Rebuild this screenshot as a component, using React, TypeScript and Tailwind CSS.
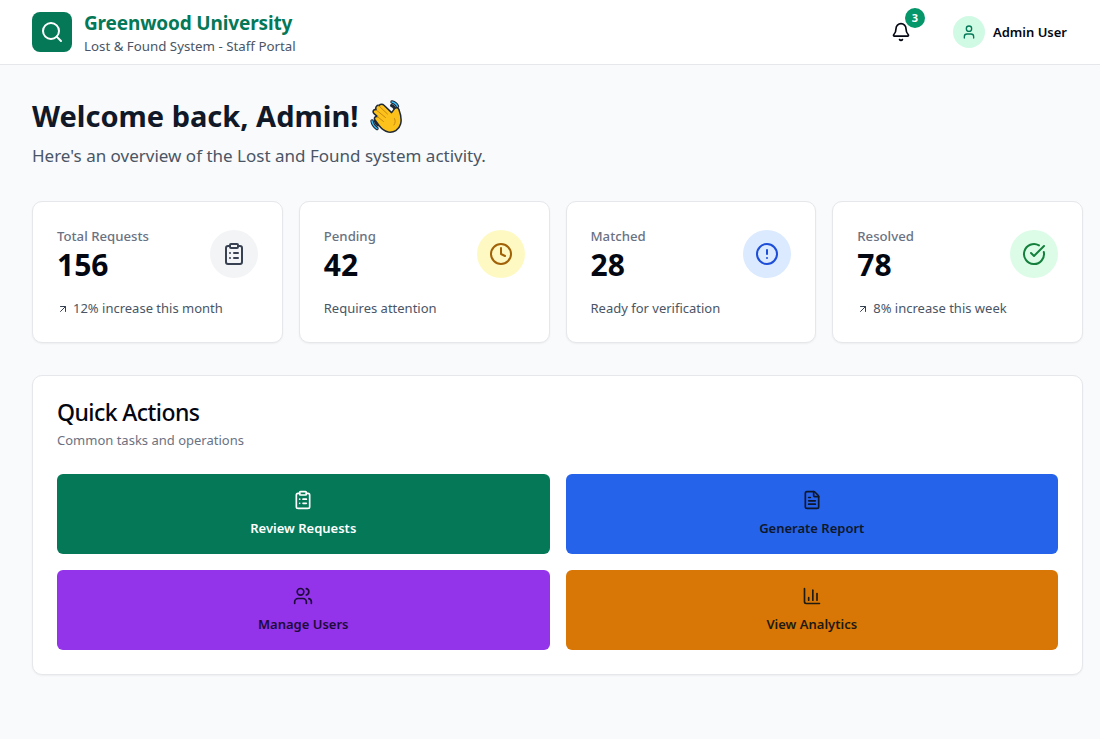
import {
  ArrowUpRight,
  Bell,
  ChartColumn,
  CircleAlert,
  CircleCheckBig,
  ClipboardList,
  Clock,
  FileText,
  Search,
  User,
  Users,
} from "lucide-react";
import type { ReactNode } from "react";

interface StatCardProps {
  label: string;
  value: string;
  note: string;
  trend?: boolean;
  iconBg: string;
  icon: ReactNode;
}

function StatCard({ label, value, note, trend, iconBg, icon }: StatCardProps) {
  return (
    <div className="h-[142px] rounded-[10px] border border-gray-200 bg-white px-6 pt-[23px] shadow-[0_1px_2px_rgba(0,0,0,0.05)]">
      <div className="flex items-start justify-between">
        <div>
          <p className="text-[13.2px] leading-[22px] font-medium text-gray-500">{label}</p>
          <p className="text-[30px] leading-[36px] font-bold text-[#030712]">{value}</p>
        </div>
        <div className={`mt-[5px] flex h-12 w-12 items-center justify-center rounded-full ${iconBg}`}>
          {icon}
        </div>
      </div>
      <div className="mt-4 flex h-5 items-center gap-1 text-[13px] text-gray-600">
        {trend && <ArrowUpRight className="h-3 w-3 text-gray-700" />}
        <span>{note}</span>
      </div>
    </div>
  );
}

interface ActionProps {
  label: string;
  bg: string;
  text: string;
  icon: ReactNode;
}

function ActionButton({ label, bg, text, icon }: ActionProps) {
  return (
    <button className={`flex h-20 flex-col items-center justify-center gap-2 rounded-md text-[13px] font-semibold ${bg} ${text}`}>
      {icon}
      <span className="leading-5">{label}</span>
    </button>
  );
}

// waving hand, drawn because the installed emoji font has a different look
function WaveEmoji() {
  return (
    <svg viewBox="0 0 33 34" className="ml-3 h-[34px] w-[33px]" role="img" aria-label="waving hand">
      <g fill="none" strokeLinecap="round">
        <path d="M22 3 C24.5 3.5 26.5 5 27.5 7.5" stroke="#1f2937" strokeWidth="3.4" />
        <path d="M21.5 6.5 C23 7 24 8 24.5 9" stroke="#1f2937" strokeWidth="3" />
        <path d="M2 22 C2.5 25 4 27.5 7 29.5" stroke="#1f2937" strokeWidth="3.4" />
        <path d="M5 21.5 C5.5 23.5 6.5 25 8 26" stroke="#1f2937" strokeWidth="3" />
        <path d="M22 3 C24.5 3.5 26.5 5 27.5 7.5" stroke="#38bdf8" strokeWidth="1.4" />
        <path d="M2 22 C2.5 25 4 27.5 7 29.5" stroke="#38bdf8" strokeWidth="1.4" />
      </g>
      <path
        d="M9 6.5 C10.5 4.8 12.8 5 14 6.3 L21.6 13.6 L24.6 9.6 C26 8 28.5 8.6 28.9 10.6 C30.6 15 32 20 30.6 25 C29 31 23.6 33.8 18.4 33 C14.6 32.3 11.4 29.6 9.2 26.8 L5 21 C3.6 19 5.2 16.8 7.4 17.6 L3.8 14.4 C2.2 12.4 3.8 9.8 6.2 10.8 C4.8 8.2 7.2 5.8 9 6.5 Z"
        fill="#fcc21b"
        stroke="#1f2937"
        strokeWidth="1.5"
        strokeLinejoin="round"
      />
      <g fill="none" stroke="#c98a12" strokeWidth="1" strokeLinecap="round">
        <path d="M9 7 L17.5 15" />
        <path d="M6.2 11 L15.5 18.5" />
        <path d="M7.4 17.6 L13.5 22.5" />
        <path d="M24 26 C25.5 24 25.5 21.5 24.5 19.5" />
      </g>
    </svg>
  );
}

export default function App() {
  return (
    <div className="min-h-[739px] bg-[#f9fafb] font-['Noto_Sans','Open_Sans',sans-serif]">
      <header className="flex h-[65px] items-center justify-between border-b border-gray-200 bg-white pl-8 pr-[33px]">
        <div className="flex items-center gap-3">
          <div className="flex h-10 w-10 items-center justify-center rounded-lg bg-[#047857]">
            <Search className="h-6 w-6 text-white" strokeWidth={2} />
          </div>
          <div>
            <h1 className="text-[19px] leading-6 font-bold tracking-[-0.15px] text-[#047857]">Greenwood University</h1>
            <p className="mt-[3px] text-[13.3px] leading-4 text-gray-600">Lost &amp; Found System - Staff Portal</p>
          </div>
        </div>
        <div className="flex items-center gap-8">
          <div className="relative flex h-10 w-10 items-center justify-center">
            <Bell className="h-5 w-5 text-[#030712]" />
            <span className="absolute -top-[4px] -right-[4px] flex h-5 w-5 items-center justify-center rounded-full bg-[#059669] text-[11px] font-bold text-white">
              3
            </span>
          </div>
          <div className="flex items-center gap-2">
            <div className="flex h-8 w-8 items-center justify-center rounded-full bg-[#d1fae5]">
              <User className="h-4 w-4 text-[#047857]" />
            </div>
            <span className="mt-[1px] text-[13px] font-semibold text-[#030712]">Admin User</span>
          </div>
        </div>
      </header>

      <main className="pt-[33px] pl-8 pr-[17px]">
        <h2 className="flex h-9 items-center text-[29px] leading-9 font-bold text-[#111827]">
          Welcome back, Admin!
          <WaveEmoji />
        </h2>
        <p className="mt-[10px] text-[17px] leading-6 text-gray-600">
          Here's an overview of the Lost and Found system activity.
        </p>

        <div className="mt-[33px] grid grid-cols-4 gap-4">
          <StatCard
            label="Total Requests"
            value="156"
            note="12% increase this month"
            trend
            iconBg="bg-[#f3f4f6]"
            icon={<ClipboardList className="h-6 w-6 text-[#374151]" />}
          />
          <StatCard
            label="Pending"
            value="42"
            note="Requires attention"
            iconBg="bg-[#fef9c3]"
            icon={<Clock className="h-6 w-6 text-[#a16207]" />}
          />
          <StatCard
            label="Matched"
            value="28"
            note="Ready for verification"
            iconBg="bg-[#dbeafe]"
            icon={<CircleAlert className="h-6 w-6 text-[#1d4ed8]" />}
          />
          <StatCard
            label="Resolved"
            value="78"
            note="8% increase this week"
            trend
            iconBg="bg-[#dcfce7]"
            icon={<CircleCheckBig className="h-6 w-6 text-[#15803d]" />}
          />
        </div>

        <section className="mt-8 rounded-[10px] border border-gray-200 bg-white p-6 shadow-[0_1px_2px_rgba(0,0,0,0.05)]">
          <h3 className="text-[23px] leading-6 font-medium tracking-tight text-[#030712]">Quick Actions</h3>
          <p className="mt-[6px] text-[13px] leading-5 text-gray-500">Common tasks and operations</p>
          <div className="mt-6 grid grid-cols-2 gap-4">
            <ActionButton
              label="Review Requests"
              bg="bg-[#047857]"
              text="text-white"
              icon={<ClipboardList className="h-5 w-5" />}
            />
            <ActionButton
              label="Generate Report"
              bg="bg-[#2563eb]"
              text="text-[#0f172a]"
              icon={<FileText className="h-5 w-5" />}
            />
            <ActionButton
              label="Manage Users"
              bg="bg-[#9333ea]"
              text="text-[#1e0b3a]"
              icon={<Users className="h-5 w-5" />}
            />
            <ActionButton
              label="View Analytics"
              bg="bg-[#d97706]"
              text="text-[#1f1a12]"
              icon={<ChartColumn className="h-5 w-5" />}
            />
          </div>
        </section>
      </main>
    </div>
  );
}
